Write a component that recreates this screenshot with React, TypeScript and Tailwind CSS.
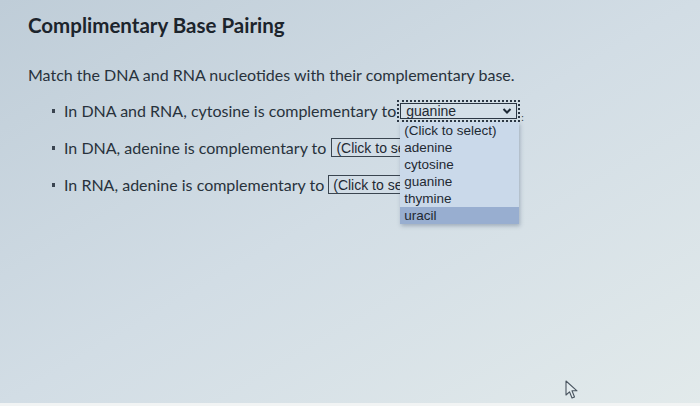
import React from "react";

function Chevron() {
  return (
    <svg width="10" height="8" viewBox="0 0 10 8" className="shrink-0">
      <path d="M1.5 2 L5 5.5 L8.5 2" fill="none" stroke="#1f2a36" strokeWidth="2" />
    </svg>
  );
}

function Cursor() {
  return (
    <svg width="14" height="20" viewBox="0 0 14 20">
      <path d="M1 1 L1 15 L4.5 11.8 L7 18 L9.5 17 L7 10.8 L12 10.8 Z" fill="#e4ecef" stroke="#4a5560" strokeWidth="1.1" strokeLinejoin="round" />
    </svg>
  );
}

function ClosedSelect() {
  return (
    <span className="inline-flex h-[19px] w-[90px] items-center overflow-hidden border border-[#3a4550] bg-[#d2dde6] px-[4px] align-middle text-[14px] leading-none text-[#1f2933] [font-family:'Liberation_Sans',Arial,sans-serif]">
      <span className="whitespace-nowrap">(Click to select)</span>
    </span>
  );
}

const options = ["(Click to select)", "adenine", "cytosine", "guanine", "thymine", "uracil"];

export default function App() {
  return (
    <div className="relative h-[406px] w-[700px] overflow-hidden bg-linear-to-br from-[#bfcdd8] via-[#d2dde5] to-[#e2eaeb] [font-family:Lato,'Open_Sans',sans-serif] text-[#28323c]">
      <div className="px-[28px] pt-[11px]">
        <h1 className="text-[20.5px] font-bold leading-[28px] text-[#1c242c]">Complimentary Base Pairing</h1>
        <p className="mt-[25px] text-[16px] leading-[22px]">Match the DNA and RNA nucleotides with their complementary base.</p>
        <ul className="mt-[14px] flex flex-col gap-[16px] pl-[24px] text-[16px]">
          <li className="flex h-[21px] items-center">
            <span className="mr-[9px] h-[4px] w-[3px] bg-[#3a4450]" />
            <span>In DNA and RNA, cytosine is complementary to</span>
            <span className="relative ml-[1px]">
              <span className="flex h-[22px] w-[123px] items-center border-2 border-dotted border-[#2c3744] p-[1px]">
                <span className="flex h-full w-full items-center justify-between border border-[#2c3744] bg-[#d4dfe8] pl-[5px] pr-[4px] text-[14px] leading-none text-[#1f2933] [font-family:'Liberation_Sans',Arial,sans-serif]">
                  guanine
                  <Chevron />
                </span>
              </span>
              <span className="absolute left-[124px] top-[12px] text-[10px] leading-none text-[#2c3744]">:</span>
              <div className="absolute left-[3px] top-[22px] z-10 w-[119px] bg-[#cad9ea] shadow-[1px_2px_4px_rgba(60,80,110,0.35)] [font-family:'Liberation_Sans',Arial,sans-serif] text-[13.5px] leading-[17px] text-[#1f2933]">
                {options.map((o) => (
                  <div key={o} className={o === "uracil" ? "bg-[#98aed0] pl-[4px]" : "pl-[4px]"}>
                    {o}
                  </div>
                ))}
              </div>
            </span>
          </li>
          <li className="flex h-[21px] items-center">
            <span className="mr-[9px] h-[4px] w-[3px] bg-[#3a4450]" />
            <span className="mr-[5px]">In DNA, adenine is complementary to</span>
            <ClosedSelect />
          </li>
          <li className="flex h-[21px] items-center">
            <span className="mr-[9px] h-[4px] w-[3px] bg-[#3a4450]" />
            <span className="mr-[4px]">In RNA, adenine is complementary to</span>
            <ClosedSelect />
          </li>
        </ul>
      </div>
      <div className="absolute left-[565px] top-[380px]">
        <Cursor />
      </div>
      <div className="absolute bottom-0 left-0 h-[3px] w-full bg-[#f2f4f4]" />
    </div>
  );
}
